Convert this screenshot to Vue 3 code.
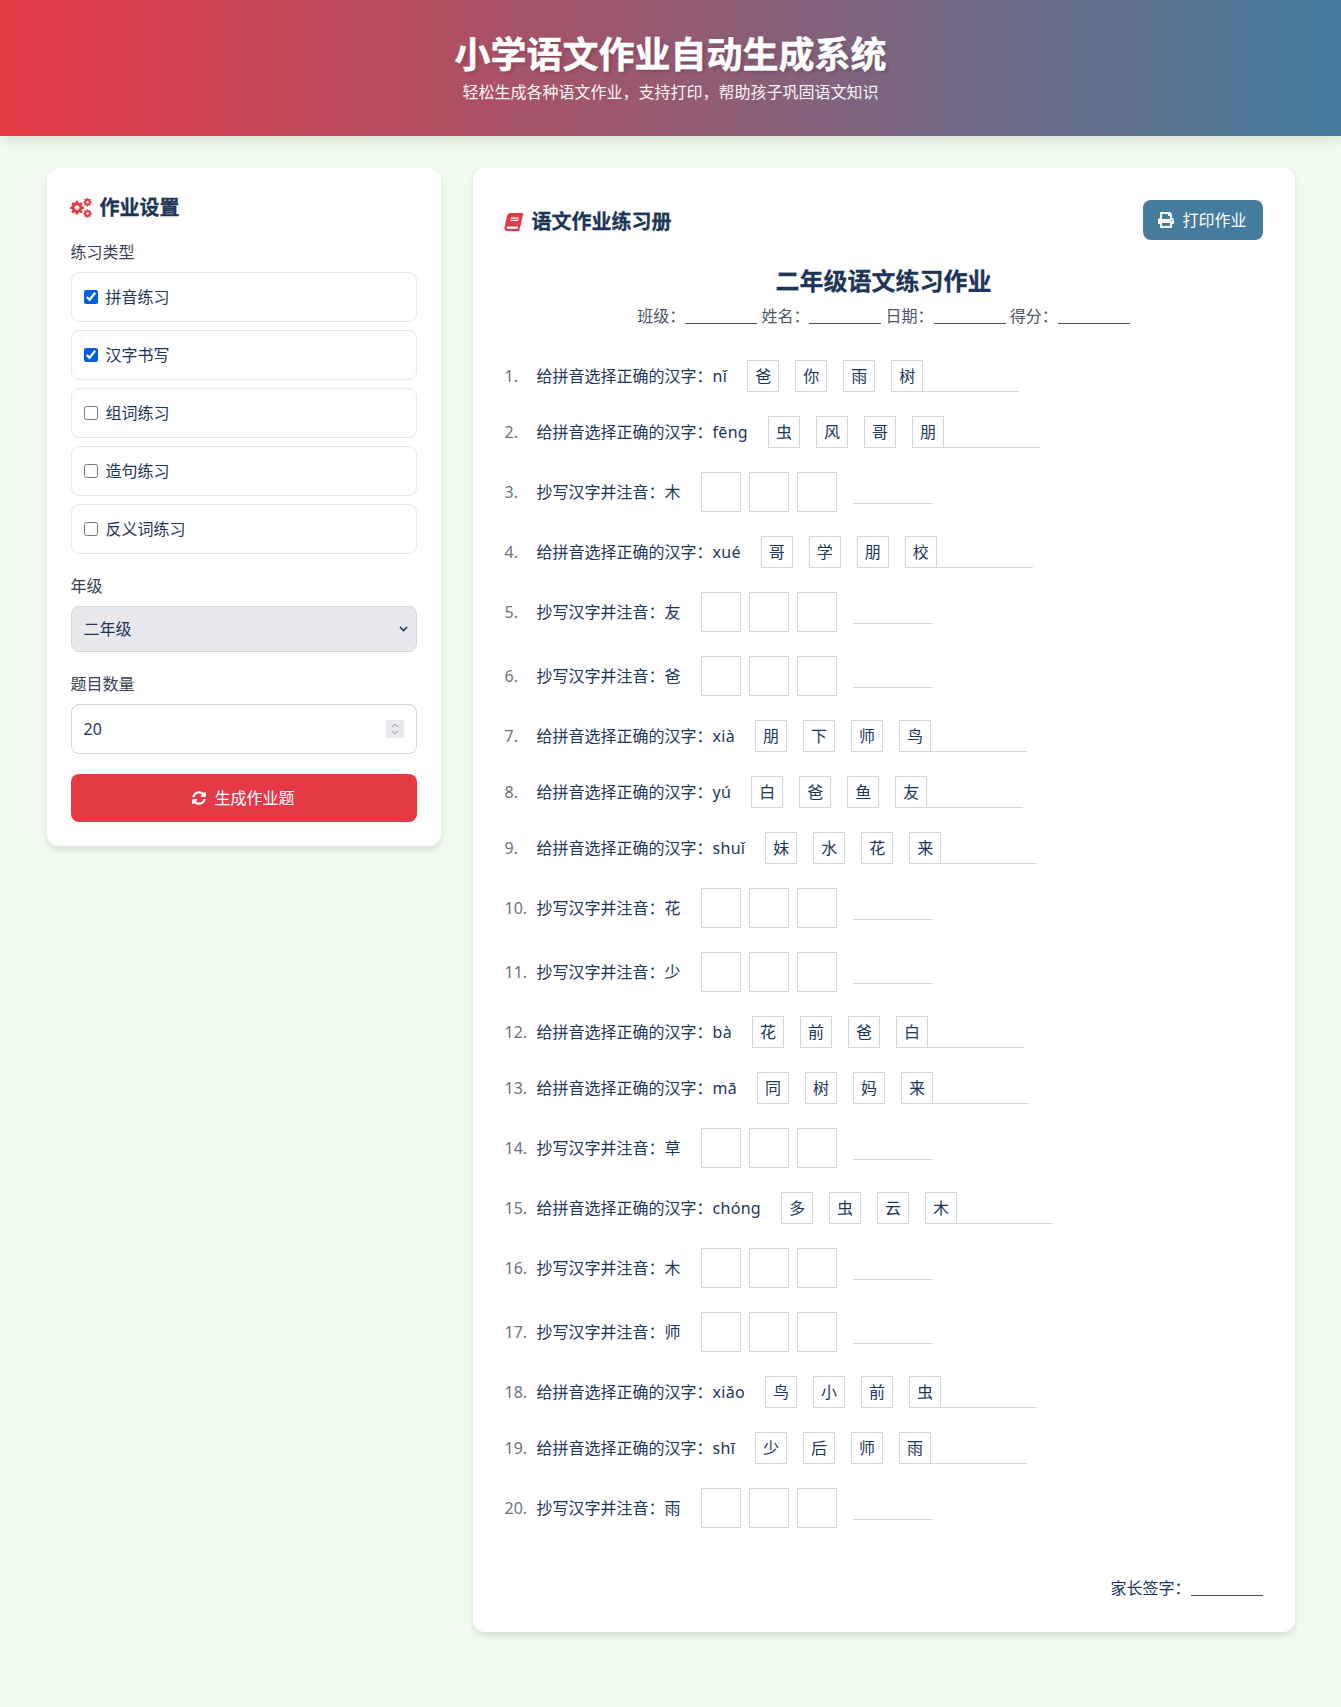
<script setup>
import { ref } from 'vue'

const kinds = ref([
  { label: '拼音练习', on: true },
  { label: '汉字书写', on: true },
  { label: '组词练习', on: false },
  { label: '造句练习', on: false },
  { label: '反义词练习', on: false }
])
const grade = ref('二年级')
const grades = ['一年级', '二年级', '三年级', '四年级', '五年级', '六年级']
const count = ref(20)

const questions = [
  { py: 'nǐ', opts: ['爸', '你', '雨', '树'] },
  { py: 'fēng', opts: ['虫', '风', '哥', '朋'] },
  { ch: '木' },
  { py: 'xué', opts: ['哥', '学', '朋', '校'] },
  { ch: '友' },
  { ch: '爸' },
  { py: 'xià', opts: ['朋', '下', '师', '鸟'] },
  { py: 'yú', opts: ['白', '爸', '鱼', '友'] },
  { py: 'shuǐ', opts: ['妹', '水', '花', '来'] },
  { ch: '花' },
  { ch: '少' },
  { py: 'bà', opts: ['花', '前', '爸', '白'] },
  { py: 'mā', opts: ['同', '树', '妈', '来'] },
  { ch: '草' },
  { py: 'chóng', opts: ['多', '虫', '云', '木'] },
  { ch: '木' },
  { ch: '师' },
  { py: 'xiǎo', opts: ['鸟', '小', '前', '虫'] },
  { py: 'shī', opts: ['少', '后', '师', '雨'] },
  { ch: '雨' }
]

// 齿轮图标用计算的方式画
const gear = (cx, cy, r, teeth, hole) => {
  const pts = []
  const inner = r * 0.78
  const step = (Math.PI * 2) / teeth
  for (let i = 0; i < teeth; i++) {
    const a = i * step
    const w = step * 0.22
    pts.push([a - w, r], [a + w, r], [a + w * 1.4, inner], [a + step - w * 1.4, inner])
  }
  const d = pts.map(([a, l], i) => `${i ? 'L' : 'M'}${(cx + Math.cos(a) * l).toFixed(2)} ${(cy + Math.sin(a) * l).toFixed(2)}`).join('')
  const h = r * hole
  return `${d}ZM${cx - h} ${cy}a${h} ${h} 0 1 0 ${h * 2} 0a${h} ${h} 0 1 0 ${-h * 2} 0Z`
}
const cogs = gear(7, 9.7, 7, 8, 0.34) + gear(17.5, 4.2, 4.3, 8, 0.3) + gear(17.5, 15.6, 4.3, 8, 0.3)
const chevron = 'M1 1l3.5 3.5L8 1'
</script>

<template>
  <div class="page">
    <header class="banner">
      <h1>小学语文作业自动生成系统</h1>
      <p>轻松生成各种语文作业，支持打印，帮助孩子巩固语文知识</p>
    </header>

    <main class="layout">
      <aside class="card settings">
        <h2 class="settings-title">
          <svg class="icon-cogs" viewBox="0 0 22 20"><path fill-rule="evenodd" :d="cogs" /></svg>
          作业设置
        </h2>

        <div class="field">
          <div class="field-label">练习类型</div>
          <label v-for="kind in kinds" :key="kind.label" class="kind">
            <input v-model="kind.on" type="checkbox" />
            <span>{{ kind.label }}</span>
          </label>
        </div>

        <div class="field">
          <div class="field-label">年级</div>
          <div class="select-wrap">
            <select v-model="grade" class="select">
              <option v-for="g in grades" :key="g">{{ g }}</option>
            </select>
            <svg class="select-arrow" viewBox="0 0 9 6"><path :d="chevron" /></svg>
          </div>
        </div>

        <div class="field">
          <div class="field-label">题目数量</div>
          <div class="number-wrap">
            <input v-model="count" class="number" type="number" min="1" max="50" />
            <span class="spin">
              <svg viewBox="0 0 9 6"><path d="M1 5l3.5-3.5L8 5" /></svg>
              <svg viewBox="0 0 9 6"><path :d="chevron" /></svg>
            </span>
          </div>
        </div>

        <button class="generate">
          <svg class="icon-sync" viewBox="0 0 512 512"><path d="M370.72 133.28C339.458 104.008 298.888 87.962 255.848 88c-77.458.068-144.328 53.178-162.791 126.85-1.344 5.363-6.122 9.15-11.651 9.15H24.103c-7.498 0-13.194-6.807-11.807-14.176C33.933 94.924 134.813 8 256 8c66.448 0 126.791 26.136 171.315 68.685L463.03 40.97C478.149 25.851 504 36.559 504 57.941V192c0 13.255-10.745 24-24 24H345.941c-21.382 0-32.09-25.851-16.971-40.971l41.75-41.749zM32 296h134.059c21.382 0 32.09 25.851 16.971 40.971l-41.75 41.75c31.262 29.273 71.835 45.319 114.876 45.28 77.418-.07 144.315-53.144 162.787-126.849 1.344-5.363 6.122-9.15 11.651-9.15h57.304c7.498 0 13.194 6.807 11.807 14.176C478.067 417.076 377.187 504 256 504c-66.448 0-126.791-26.136-171.315-68.685L48.97 471.03C33.851 486.149 8 475.441 8 454.059V320c0-13.255 10.745-24 24-24z" /></svg>
          生成作业题
        </button>
      </aside>

      <section class="card sheet">
        <div class="sheet-head">
          <h2 class="sheet-title">
            <svg class="icon-book" viewBox="0 0 448 512"><path d="M448 360V24c0-13.3-10.7-24-24-24H96C43 0 0 43 0 96v320c0 53 43 96 96 96h328c13.3 0 24-10.7 24-24v-16c0-7.5-3.5-14.3-8.9-18.7-4.2-15.4-4.2-59.3 0-74.7 5.4-4.3 8.9-11.1 8.9-18.6zM128 134c0-3.3 2.7-6 6-6h212c3.3 0 6 2.7 6 6v20c0 3.3-2.7 6-6 6H134c-3.3 0-6-2.7-6-6v-20zm0 64c0-3.3 2.7-6 6-6h212c3.3 0 6 2.7 6 6v20c0 3.3-2.7 6-6 6H134c-3.3 0-6-2.7-6-6v-20zm253.4 250H96c-17.7 0-32-14.3-32-32 0-17.6 14.4-32 32-32h285.4c-1.9 17.1-1.9 46.9 0 64z" /></svg>
            语文作业练习册
          </h2>
          <button class="print">
            <svg class="icon-btn" viewBox="0 0 512 512"><path d="M448 192V77.25c0-8.49-3.37-16.62-9.37-22.63L393.37 9.37c-6-6-14.14-9.37-22.63-9.37H96C78.33 0 64 14.33 64 32v160c-35.35 0-64 28.65-64 64v112c0 8.84 7.16 16 16 16h48v96c0 17.67 14.33 32 32 32h320c17.67 0 32-14.33 32-32v-96h48c8.84 0 16-7.16 16-16V256c0-35.35-28.65-64-64-64zm-64 256H128v-96h256v96zm0-224H128V64h192v48c0 8.84 7.16 16 16 16h48v96zm48 72c-13.25 0-24-10.75-24-24 0-13.26 10.75-24 24-24s24 10.74 24 24c0 13.25-10.75 24-24 24z" /></svg>
            打印作业
          </button>
        </div>

        <h3 class="sheet-name">二年级语文练习作业</h3>
        <p class="sheet-info">班级：<span class="blank"></span> 姓名：<span class="blank"></span> 日期：<span class="blank"></span> 得分：<span class="blank"></span></p>

        <ol class="questions">
          <li v-for="(q, i) in questions" :key="i" class="question" :class="q.py ? 'is-choice' : 'is-write'">
            <span class="num">{{ i + 1 }}.</span>
            <template v-if="q.py">
              <span class="ask">给拼音选择正确的汉字：<span class="py">{{ q.py }}</span></span>
              <span class="opts">
                <span v-for="o in q.opts" :key="o" class="opt">{{ o }}</span>
              </span>
              <span class="answer"></span>
            </template>
            <template v-else>
              <span class="ask">抄写汉字并注音：{{ q.ch }}</span>
              <span class="boxes">
                <span v-for="n in 3" :key="n" class="box"></span>
              </span>
              <span class="pinyin-line"></span>
            </template>
          </li>
        </ol>

        <div class="sign">家长签字：<span class="blank"></span></div>
      </section>
    </main>
  </div>
</template>

<style>
body {
  background: #f1faee;
}
</style>

<style scoped>
.page {
  font-family: "Noto Sans", "Noto Sans CJK SC", sans-serif;
  color: #1d3557;
  font-size: 16px;
  line-height: 24px;
  min-height: 1707px;
  background: #f1faee;
}

.banner {
  height: 136px;
  box-sizing: border-box;
  padding-top: 35px;
  text-align: center;
  color: #fff;
  background: linear-gradient(90deg, #e63946, #457b9d);
  box-shadow: 0 4px 12px rgba(0, 0, 0, 0.1);
}

.banner h1 {
  margin: 0;
  font-size: 36px;
  line-height: 40px;
  font-weight: 700;
  -webkit-text-stroke: 0.5px #fff;
  text-shadow: 2px 2px 4px rgba(0, 0, 0, 0.2);
}

.banner p {
  margin: 5px 0 0;
  font-size: 16px;
  line-height: 24px;
  opacity: 0.95;
}

.layout {
  display: grid;
  grid-template-columns: 394px 1fr;
  gap: 32px;
  align-items: start;
  width: 1248px;
  margin: 32px auto 0;
}

.card {
  background: #fff;
  border-radius: 12px;
  box-shadow: 0 4px 6px rgba(0, 0, 0, 0.1);
}

.settings {
  padding: 24px;
}

.settings-title {
  display: flex;
  align-items: center;
  gap: 8px;
  margin: 0 0 16px;
  font-size: 20px;
  line-height: 32px;
  font-weight: 700;
  -webkit-text-stroke: 0.3px #1d3557;
}

.icon-cogs {
  width: 22px;
  height: 20px;
  margin-left: -1px;
  fill: #e63946;
}

.field {
  margin-bottom: 20px;
}

.field-label {
  color: #374151;
  margin-bottom: 8px;
}

.kind {
  display: flex;
  align-items: center;
  height: 50px;
  box-sizing: border-box;
  padding: 0 12px;
  margin-bottom: 8px;
  border: 1px solid #e5e7eb;
  border-radius: 8px;
}

.kind:last-child {
  margin-bottom: 0;
}

.kind input {
  width: 14px;
  height: 14px;
  margin: 0 8px 0 0;
  accent-color: #0060df;
}

.select-wrap,
.number-wrap {
  position: relative;
}

.select,
.number {
  display: block;
  width: 100%;
  box-sizing: border-box;
  border: 1px solid #d1d5db;
  border-radius: 8px;
  font: inherit;
  color: #1d3557;
  padding: 0 12px;
}

.select {
  height: 46px;
  appearance: none;
  background-color: #e9e9ed;
}

.select-arrow {
  position: absolute;
  right: 9px;
  top: 20px;
  width: 9px;
  height: 6px;
  fill: none;
  stroke: #1d3557;
  stroke-width: 1.6;
}

.number {
  height: 50px;
  background: #fff;
}

.number::-webkit-inner-spin-button {
  display: none;
}

.spin {
  position: absolute;
  right: 13px;
  top: 16px;
  width: 18px;
  height: 18px;
  display: flex;
  flex-direction: column;
  align-items: center;
  justify-content: center;
  gap: 2px;
  background: #e9e9ed;
}

.spin svg {
  width: 8px;
  height: 5px;
  fill: none;
  stroke: #8a8a94;
  stroke-width: 1.2;
}

.generate {
  display: flex;
  align-items: center;
  justify-content: center;
  gap: 8px;
  width: 100%;
  height: 48px;
  border: 0;
  border-radius: 8px;
  background: #e63946;
  color: #fff;
  font: inherit;
}

.icon-sync {
  width: 14px;
  height: 14px;
  fill: #fff;
}

.icon-btn {
  width: 16px;
  height: 16px;
  fill: #fff;
}

.sheet {
  padding: 32px;
}

.sheet-head {
  display: flex;
  align-items: center;
  justify-content: space-between;
}

.sheet-title {
  display: flex;
  align-items: center;
  gap: 10px;
  margin: 4px 0 0;
  font-size: 20px;
  line-height: 28px;
  font-weight: 700;
  -webkit-text-stroke: 0.3px #1d3557;
}

.icon-book {
  width: 17px;
  height: 18px;
  fill: #e63946;
  transform: skewX(-12deg);
}

.print {
  display: flex;
  align-items: center;
  gap: 8px;
  height: 40px;
  padding: 0 16px 0 15px;
  border: 0;
  border-radius: 8px;
  background: #457b9d;
  color: #fff;
  font: inherit;
}

.sheet-name {
  margin: 25px 0 0;
  text-align: center;
  font-size: 24px;
  line-height: 32px;
  font-weight: 700;
  -webkit-text-stroke: 0.3px #1d3557;
}

.sheet-info {
  margin: 7px 0 0;
  text-align: center;
  color: #4b5563;
  line-height: 24px;
}

.blank {
  display: inline-block;
  width: 72px;
  border-bottom: 1px solid #4b5563;
  vertical-align: -2px;
}

.questions {
  list-style: none;
  margin: 32px 0 0;
  padding: 0;
}

.question {
  display: flex;
  align-items: center;
}

.question.is-choice {
  height: 32px;
  margin-bottom: 24px;
}

.question.is-write {
  height: 40px;
  margin-bottom: 24px;
}

.num {
  width: 32px;
  color: #6b7280;
}

.py {
  letter-spacing: 0.3px;
}

.opts {
  display: flex;
  gap: 16px;
  margin-left: 20px;
}

.opt {
  width: 32px;
  height: 32px;
  box-sizing: border-box;
  border: 1px solid #d1d5db;
  text-align: center;
  line-height: 30px;
}

.answer {
  width: 96px;
  height: 32px;
  box-sizing: border-box;
  border-bottom: 1px solid #d1d5db;
}

.boxes {
  display: flex;
  gap: 8px;
  margin-left: 20px;
}

.box {
  width: 40px;
  height: 40px;
  box-sizing: border-box;
  border: 1px solid #d1d5db;
}

.pinyin-line {
  width: 80px;
  height: 32px;
  margin-left: 16px;
  align-self: flex-start;
  box-sizing: border-box;
  border-bottom: 1px solid #d1d5db;
}

.sign {
  margin-top: 48px;
  text-align: right;
}
</style>
